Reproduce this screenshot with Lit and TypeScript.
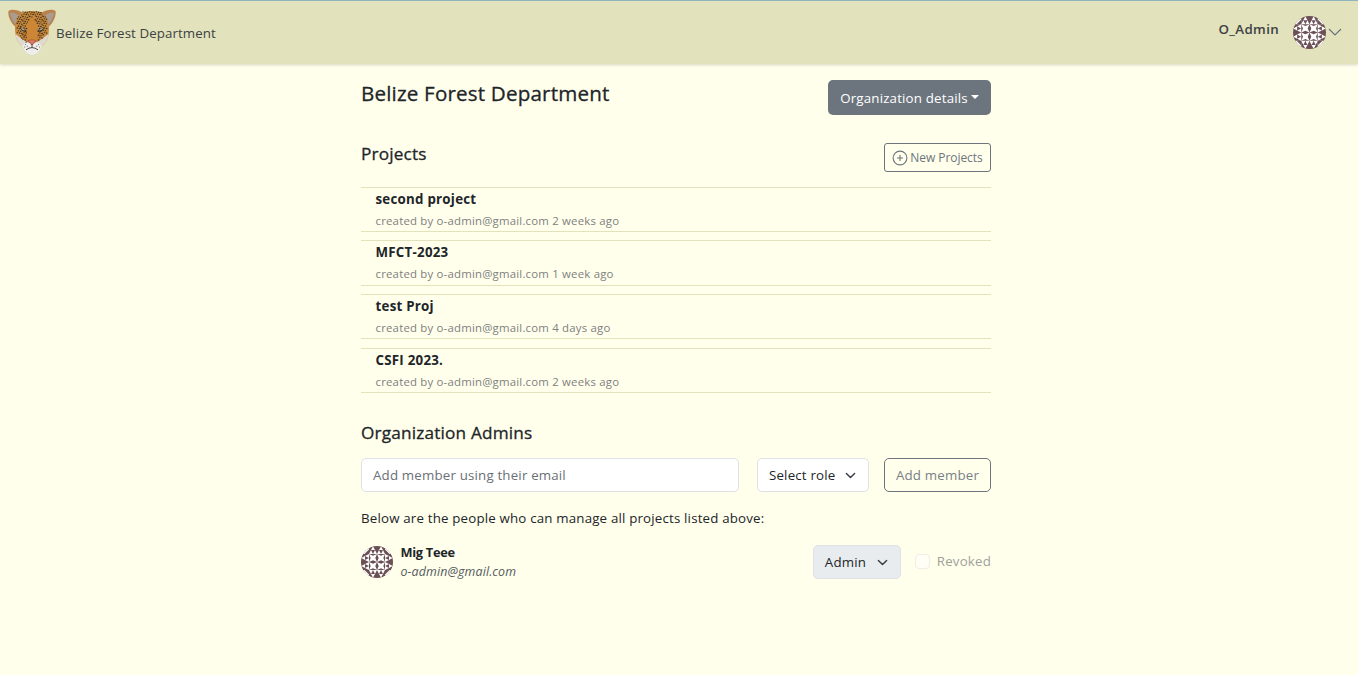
import { LitElement, html, css, svg } from "lit";
import { customElement, property } from "lit/decorators.js";

@customElement("org-avatar")
class OrgAvatar extends LitElement {
  static styles = css`
    :host { display: block; flex: none; }
    svg { display: block; width: 100%; height: 100%; border-radius: 50%; }
  `;

  render() {
    const edge = svg`<path d="M4 0.3 L6 4 H2Z M2 4 L4 8 H0Z M6 4 L8 8 H4Z" fill="#fff"/>`;
    const corner = svg`<path d="M8 0 V8 H0 Z" fill="#fff"/><path d="M8 3.5 V8 H3.5 Z" fill="#6c5055"/>`;
    const star = svg`<path d="M0 0 L4 1.7 L8 0 L6.3 4 L8 8 L4 6.3 L0 8 L1.7 4Z" fill="#fff"/>`;
    return html`<svg viewBox="0 0 32 32">
      <rect width="32" height="32" fill="#6c5055"></rect>
      ${[0, 90, 180, 270].map(
        (a) => svg`<g transform="rotate(${a} 16 16)">
          ${corner}
          <g transform="translate(8 0)">${edge}</g>
          <g transform="translate(16 0)">${edge}</g>
          <g transform="translate(8 8)">${star}</g>
        </g>`
      )}
    </svg>`;
  }
}

@customElement("leopard-logo")
class LeopardLogo extends LitElement {
  static styles = css`
    :host { display: block; width: 48px; height: 48px; flex: none; }
    svg { display: block; }
  `;

  private spots() {
    const out: unknown[] = [];
    for (let r = 0; r < 14; r++) {
      for (let c = 0; c < 15; c++) {
        const x = 8.2 + c * 2.25 + (r % 2) * 1.1;
        const y = 3.8 + r * 2.3 + ((c * 7) % 3) * 0.5;
        const dx = Math.abs(x - 24);
        const nose = dx < (y < 16 ? 3 : 5.6) && y > 9;
        const limit = y < 8 ? 9 + (y - 3) * 0.9 : y < 24 ? 15.4 : 15.4 - (y - 24) * 0.8;
        if (nose || dx > limit) continue;
        out.push(svg`<ellipse cx=${x} cy=${y} rx=${0.6 + ((r + c) % 3) * 0.2} ry="0.75"/>`);
      }
    }
    return out;
  }

  render() {
    return html`<svg viewBox="0 0 48 48" width="48" height="48">
      <path d="M15 5 C9 1 3 1 0.5 3 C-0.5 9 4 17 9 20Z" fill="#b98350"></path>
      <path d="M33 5 C39 1 45 1 47.5 3 C48.5 9 44 17 39 20Z" fill="#b98350"></path>
      <path d="M11.5 8 C8 5 4 3.8 2 4.8 C2.5 9 5 14.5 8.5 17Z" fill="#a99c90"></path>
      <path d="M36.5 8 C40 5 44 3.8 46 4.8 C45.5 9 43 14.5 39.5 17Z" fill="#a99c90"></path>
      <path d="M24 3 C17 3 12.5 4.5 10 9 C7 14 6.5 20 7.5 26 C8 32 11 36 15.5 39 C18 44.5 20 47 24 47 C28 47 30 44.5 32.5 39 C37 36 40 32 40.5 26 C41.5 20 41 14 38 9 C35.5 4.5 31 3 24 3Z" fill="#c68a3f"></path>
      <path d="M7.5 26 C8 32 11 36 15.5 39 C18 44.5 20 47 24 47 C28 47 30 44.5 32.5 39 C37 36 40 32 40.5 26 L34 31 L24 36 L14 31Z" fill="#dedad1"></path>
      <path d="M14 27 L18.5 20 H29.5 L34 27 L31 33 L24 36 L17 33Z" fill="#c28039"></path>
      <path d="M21.5 10 H26.5 L29 24 L28.5 34 H19.5 L19 24Z" fill="#cc8636"></path>
      <g fill="#3a2818" opacity="0.85">${this.spots()}</g>
      <path d="M11.8 19.5 Q15 18.8 18.8 23.6 Q13.8 24.4 11.8 19.5Z M36.2 19.5 Q33 18.8 29.2 23.6 Q34.2 24.4 36.2 19.5Z" fill="#2b251f"></path>
      <path d="M12.8 20 Q16 19.4 17.2 22.4 Q14 23 12.8 20Z M35.2 20 Q32 19.4 30.8 22.4 Q34 23 35.2 20Z" fill="#a3aa9b"></path>
      <path d="M24 36 Q17 32 14.5 38 Q17.5 47 24 47 Q30.5 47 33.5 38 Q31 32 24 36Z" fill="#efeeec"></path>
      <path d="M20 32.6 Q24 30.8 28 32.6 L25 36.4 H23Z" fill="#dc7568" stroke="#7a4030" stroke-width="0.4"></path>
      <path d="M24 36 V39.4 M18 41.8 Q21 39.6 24 39.6 Q27 39.6 30 41.8" fill="none" stroke="#29211d" stroke-width="0.8"></path>
      <path d="M17 36.6h.9M18.8 38.2h.9M16.4 39h.8M28.3 38.2h.9M30 36.6h.9M31 39h.8" stroke="#453c36" stroke-width="0.8"></path>
    </svg>`;
  }
}

@customElement("project-item")
class ProjectItem extends LitElement {
  @property() name = "";
  @property() age = "";

  static styles = css`
    :host {
      display: block;
      box-sizing: border-box;
      height: 45.4px;
      padding-left: 14.5px;
      border-top: 1px solid #e2e2bd;
      border-bottom: 1px solid #e2e2bd;
    }
    .name { font-size: 13.3px; font-weight: 700; line-height: 22px; letter-spacing: 0.25px; color: #212529; }
    .meta { font-size: 11.4px; line-height: 22.2px; letter-spacing: 0.2px; color: #808080; }
  `;

  render() {
    return html`<div class="name">${this.name}</div>
      <div class="meta">created by o-admin@gmail.com ${this.age}</div>`;
  }
}

@customElement("app-root")
class AppRoot extends LitElement {
  static styles = css`
    :host {
      display: block;
      min-height: 675px;
      background: #ffffec;
      color: #212529;
      font-family: "Open Sans", "Noto Sans", sans-serif;
      font-size: 13.3px;
      letter-spacing: 0.18px;
    }
    * { box-sizing: border-box; }
    h1, h2, p { margin: 0; font-weight: 500; }
    h1, h2 { -webkit-text-stroke: 0.3px #212529; }
    .bar {
      height: 64px;
      border-top: 1px solid #8fb3bd;
      background: #e2e2bd;
      box-shadow: 0 1px 3px rgba(0, 0, 0, 0.16);
      display: flex;
      align-items: flex-start;
      padding: 7px 16px 0 8px;
    }
    .brand { color: #3c4143; line-height: 20px; letter-spacing: 0.09px; margin: 15px auto 0 0; white-space: nowrap; }
    .user { color: #3c4143; font-weight: 600; line-height: 20px; letter-spacing: 0.35px; margin: 11px 14px 0 0; }
    .bar org-avatar { width: 33px; height: 33px; margin-top: 8px; }
    .chev { margin: 17px 0 0 2px; }
    main { width: 630px; margin: 0 0 0 361px; padding-top: 16px; }
    .row { display: flex; justify-content: space-between; align-items: flex-start; }
    h1 { font-size: 20.6px; line-height: 27px; }
    h2 { font-size: 17.2px; line-height: 22px; }
    .details {
      width: 163px; height: 35px; border-radius: 5px; background: #6c757d; color: #fff;
      display: flex; align-items: center; justify-content: center; gap: 3px; white-space: nowrap;
    }
    .caret { border: 4px solid transparent; border-top-color: #fff; border-bottom: 0; margin-bottom: 1px; }
    .new {
      width: 107px; height: 29px; border: 1px solid #6c757d; border-radius: 3px; color: #6c757d;
      display: flex; align-items: center; justify-content: center; gap: 2px; font-size: 12px; letter-spacing: -0.05px; white-space: nowrap;
    }
    .projects-head { margin-top: 28px; }
    .list { display: flex; flex-direction: column; gap: 8.2px; margin-top: 14.8px; }
    .admins { margin-top: 29px; }
    .form { display: flex; margin-top: 14px; height: 34px; }
    .field {
      background: #fff; border: 1px solid #dee2e6; border-radius: 5px; height: 34px; padding: 0 12px 0 11px;
      display: flex; align-items: center; justify-content: space-between; white-space: nowrap;
    }
    .email { width: 378px; color: #6a7076; }
    .role { width: 112px; margin-left: 18px; }
    .add {
      width: 107px; margin-left: 15px; border: 1px solid #6c757d; border-radius: 5px; color: #788087;
      display: flex; align-items: center; justify-content: center; white-space: nowrap;
    }
    .arrow { margin-top: 1px; }
    .note { font-weight: 400; line-height: 20px; margin-top: 16px; }
    .member { display: flex; align-items: flex-start; margin-top: 17px; }
    .member org-avatar { width: 32px; height: 32px; margin-top: 1px; }
    .who { margin: -2px auto 0 7.5px; line-height: 19px; }
    .who b { display: block; font-size: 12.8px; letter-spacing: -0.3px; }
    .who i { font-size: 12.4px; letter-spacing: 0.12px; color: #555b60; }
    .locked { width: 88px; background: #e9ecef; }
    .box { width: 15px; height: 15px; border: 1px solid #eeeee7; border-radius: 4px; background: #fffff5; margin: 9px 7px 0 14px; }
    .revoked { color: #a0a29a; line-height: 20px; margin-top: 6px; }
  `;

  private projects = [
    { name: "second project", age: "2 weeks ago" },
    { name: "MFCT-2023", age: "1 week ago" },
    { name: "test Proj", age: "4 days ago" },
    { name: "CSFI 2023.", age: "2 weeks ago" },
  ];

  private arrow() {
    return html`<svg class="arrow" width="11" height="11" viewBox="0 0 16 16" fill="none" stroke="#343a40" stroke-width="2" stroke-linecap="round" stroke-linejoin="round"><path d="m2 5 6 6 6-6"></path></svg>`;
  }

  render() {
    return html`
      <header class="bar">
        <leopard-logo></leopard-logo>
        <span class="brand">Belize Forest Department</span>
        <span class="user">O_Admin</span>
        <org-avatar></org-avatar>
        <svg class="chev" width="14" height="14" viewBox="0 0 14 14" fill="none" stroke="#66717a" stroke-width="1.1"><path d="m1 4 6 6 6-6"></path></svg>
      </header>
      <main>
        <div class="row">
          <h1>Belize Forest Department</h1>
          <div class="details"><span>Organization details</span><span class="caret"></span></div>
        </div>
        <div class="row projects-head">
          <h2>Projects</h2>
          <div class="new">
            <svg width="16" height="16" viewBox="0 0 16 16" fill="none" stroke="#6c757d" stroke-width="1.1"><circle cx="8" cy="8" r="6.9"></circle><path d="M8 5v6M5 8h6"></path></svg>
            <span>New Projects</span>
          </div>
        </div>
        <div class="list">
          ${this.projects.map((p) => html`<project-item .name=${p.name} .age=${p.age}></project-item>`)}
        </div>
        <h2 class="admins">Organization Admins</h2>
        <div class="form">
          <div class="field email"><span>Add member using their email</span></div>
          <div class="field role"><span>Select role</span>${this.arrow()}</div>
          <div class="add"><span>Add member</span></div>
        </div>
        <p class="note">Below are the people who can manage all projects listed above:</p>
        <div class="member">
          <org-avatar></org-avatar>
          <div class="who"><b>Mig Teee</b><i>o-admin@gmail.com</i></div>
          <div class="field locked"><span>Admin</span>${this.arrow()}</div>
          <span class="box"></span>
          <span class="revoked">Revoked</span>
        </div>
      </main>
    `;
  }
}
